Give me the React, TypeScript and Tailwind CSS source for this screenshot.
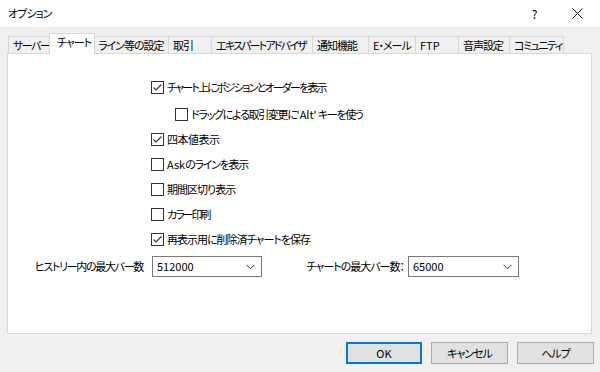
import React from "react";

const Check = ({ checked }: { checked: boolean }) => (
  <div className="w-[13px] h-[13px] border border-[#333333] bg-white flex items-center justify-center shrink-0">
    {checked && (
      <svg width="11" height="11" viewBox="0 0 11 11">
        <polyline points="1.5,5.5 4,8 9.5,2.5" fill="none" stroke="#333333" strokeWidth="1.1" />
      </svg>
    )}
  </div>
);

const Row = ({ checked, label, className = "", textClass = "" }: { checked: boolean; label: React.ReactNode; className?: string; textClass?: string }) => (
  <div className={`h-[13px] flex items-center gap-[3px] ${className}`}>
    <Check checked={checked} />
    <span className={`leading-none whitespace-nowrap ${textClass}`}>{label}</span>
  </div>
);

const Select = ({ value, w }: { value: string; w: string }) => (
  <div className={`h-[21px] ${w} border border-[#7a7a7a] bg-white flex items-center pl-[4px] pr-[6px]`}>
    <span className="leading-none tracking-normal">{value}</span>
    <svg className="ml-auto" width="9" height="6" viewBox="0 0 9 6">
      <polyline points="0.5,0.8 4.5,4.8 8.5,0.8" fill="none" stroke="#333333" strokeWidth="1" />
    </svg>
  </div>
);

const tabs: { label: string; w: string; sel?: boolean; tr?: string }[] = [
  { label: "サーバー", w: "w-[43px]", tr: "tracking-[-1.5px]" },
  { label: "チャート", w: "w-[46px]", sel: true },
  { label: "ライン等の設定", w: "w-[75px]" },
  { label: "取引", w: "w-[43px]" },
  { label: "エキスパートアドバイザ", w: "w-[101px]", tr: "tracking-[-1.8px]" },
  { label: "通知機能", w: "w-[56px]" },
  { label: "E・メール", w: "w-[47px]" },
  { label: "FTP", w: "w-[43px]", tr: "tracking-normal" },
  { label: "音声設定", w: "w-[51px]" },
  { label: "コミュニティ", w: "w-[55px]", tr: "tracking-[-1.5px]" },
];

export default function App() {
  return (
    <div className="w-[600px] h-[372px] bg-[#f0f0f0] flex flex-col text-[11px] tracking-[-1px] text-black font-['Noto_Sans_CJK_JP','Noto_Sans',sans-serif] [font-feature-settings:'palt'] overflow-hidden">
      {/* title bar */}
      <div className="h-[27px] bg-white flex items-center pl-[8px] shrink-0">
        <span className="leading-none">オプション</span>
        <div className="ml-auto flex items-center">
          <span className="w-[40px] text-center text-[12px] leading-none">?</span>
          <div className="w-[46px] flex justify-center">
            <svg width="11" height="11" viewBox="0 0 11 11">
              <line x1="0.5" y1="0.5" x2="10.5" y2="10.5" stroke="#111" strokeWidth="1" />
              <line x1="10.5" y1="0.5" x2="0.5" y2="10.5" stroke="#111" strokeWidth="1" />
            </svg>
          </div>
        </div>
      </div>

      <div className="pl-[7px] pr-[8px] pt-[6px] flex flex-col">
        {/* tab strip */}
        <div className="h-[20px] flex items-end pl-[1px] relative z-10">
          {tabs.map((t, i) =>
            t.sel ? (
              <div
                key={i}
                className={`${t.w} -mx-[2px] h-[21px] -mb-px bg-white border border-b-0 border-[#d9d9d9] flex items-start pt-[3px] pl-[7px] relative z-10`}
              >
                <span className="leading-none whitespace-nowrap">{t.label}</span>
              </div>
            ) : (
              <div
                key={i}
                className={`${t.w} h-[17px] bg-[#f0f0f0] border-t border-l ${i === tabs.length - 1 ? "border-r" : ""} border-[#d9d9d9] flex items-center pl-[4px] overflow-hidden`}
              >
                <span className={`leading-none whitespace-nowrap ${t.tr ?? ""}`}>{t.label}</span>
              </div>
            )
          )}
        </div>

        {/* panel */}
        <div className="h-[281px] bg-white border border-[#d9d9d9] flex flex-col pt-[27px]">
          <div className="flex flex-col pl-[143px]">
            <Row checked label="チャート上にポジションとオーダーを表示" textClass="tracking-[-1.8px]" />
            <Row
              checked={false}
              label={
                <>
                  ドラッグによる取引変更に<span className="tracking-normal">'Alt'</span> キーを使う
                </>
              }
              className="ml-[24px] mt-[14px]"
              textClass="tracking-[-1.3px]"
            />
            <Row checked label="四本値表示" className="mt-[12px]" textClass="tracking-[-0.5px]" />
            <Row
              checked={false}
              label={
                <>
                  <span className="tracking-normal">Ask</span>のラインを表示
                </>
              }
              className="mt-[12px]"
              textClass="tracking-[-1.3px]"
            />
            <Row checked={false} label="期間区切り表示" className="mt-[12px]" />
            <Row checked={false} label="カラー印刷" className="mt-[12px]" textClass="tracking-[-2px]" />
            <Row checked label="再表示用に削除済チャートを保存" className="mt-[12px]" />
          </div>
          <div className="flex items-center mt-[10px]">
            <div className="w-[144px] flex justify-end pr-[9px]">
              <span className="leading-none whitespace-nowrap tracking-[-1.3px]">ヒストリー内の最大バー数</span>
            </div>
            <Select value="512000" w="w-[110px]" />
            <div className="w-[146px] flex justify-end pr-[4px]">
              <span className="leading-none whitespace-nowrap">チャートの最大バー数：</span>
            </div>
            <Select value="65000" w="w-[111px]" />
          </div>
        </div>
      </div>

      {/* buttons */}
      <div className="flex justify-end gap-[9px] pr-[6px] mt-[8px]">
        <div className="w-[76px] h-[22px] bg-[#e1e1e1] border border-[#0078d7] shadow-[inset_0_0_0_1px_#0078d7] flex items-center justify-center">
          <span className="leading-none tracking-normal">OK</span>
        </div>
        <div className="w-[77px] h-[22px] bg-[#e1e1e1] border border-[#adadad] flex items-center justify-center">
          <span className="leading-none">キャンセル</span>
        </div>
        <div className="w-[77px] h-[22px] bg-[#e1e1e1] border border-[#adadad] flex items-center justify-center">
          <span className="leading-none">ヘルプ</span>
        </div>
      </div>
    </div>
  );
}
